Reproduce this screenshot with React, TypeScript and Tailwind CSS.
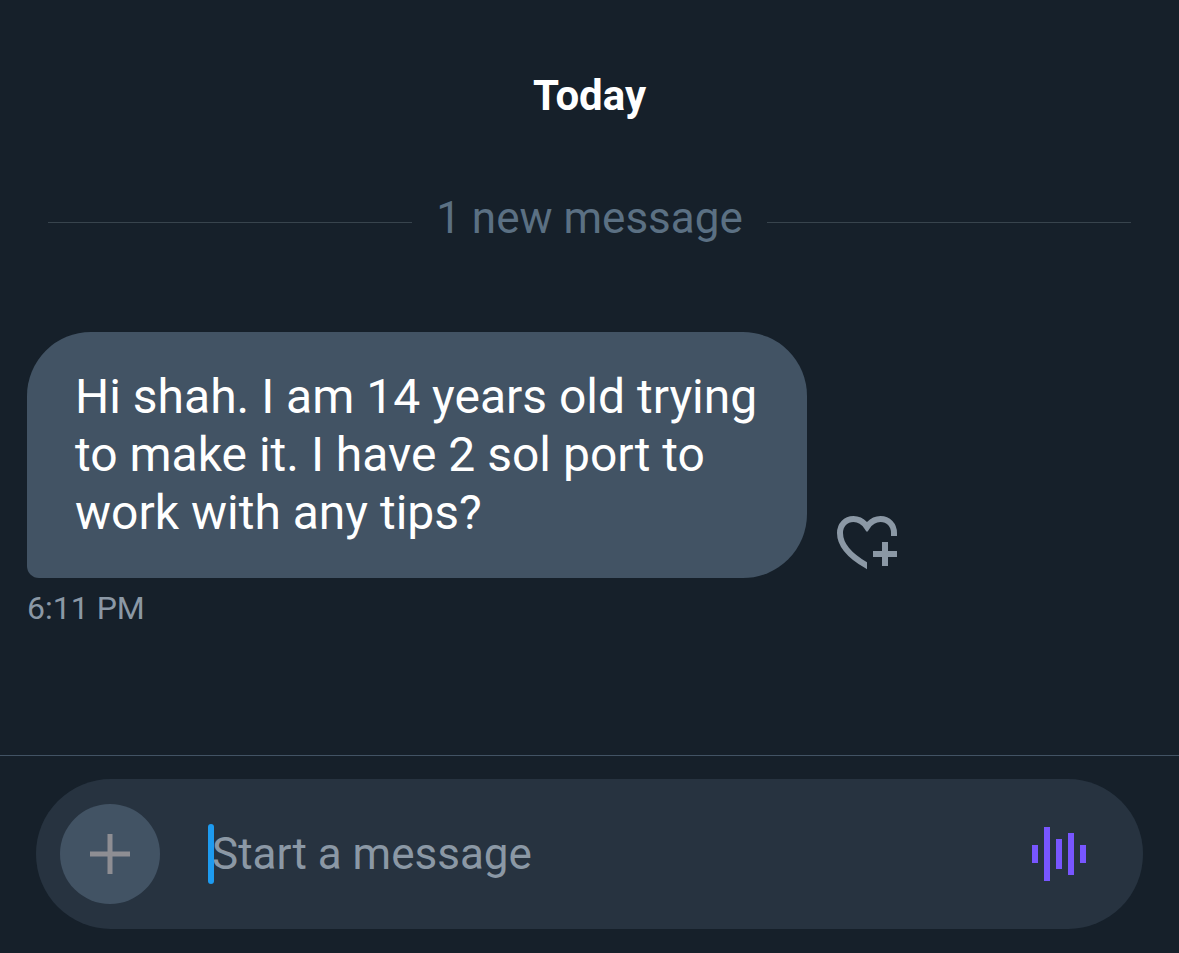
import React from "react";

function HeartPlusIcon() {
  return (
    <svg viewBox="0 0 62 56" className="h-14 w-[62px]" fill="none" aria-hidden="true">
      <clipPath id="heart-left">
        <rect x="0" y="0" width="31" height="56" />
      </clipPath>
      <clipPath id="heart-right">
        <rect x="31" y="0" width="31" height="56" />
      </clipPath>
      <g stroke="#8b98a5" strokeWidth="6">
        <path
          clipPath="url(#heart-left)"
          d="M33 15L31 12C27.500 6.700 22.500 4 17.500 4C9.500 4 4 10 4 18C4 29.500 13 40.500 31 50.700L36 53.500"
        />
        <path clipPath="url(#heart-right)" d="M29 15L31 12C34.500 6.700 39.500 4 44.500 4C52.500 4 58 10 58 18V21" />
        <path d="M49 27v24M37 39h24" />
      </g>
    </svg>
  );
}

function VoiceIcon() {
  return (
    <svg viewBox="0 0 54 54" className="h-[54px] w-[54px]" fill="#7856ff" aria-hidden="true">
      <rect x="0" y="18" width="6" height="18" />
      <rect x="12" y="0" width="6" height="54" />
      <rect x="24" y="12" width="6" height="30" />
      <rect x="36" y="6" width="6" height="42" />
      <rect x="48" y="18" width="6" height="18" />
    </svg>
  );
}

export default function App() {
  return (
    <div className="flex min-h-screen flex-col bg-[#16202a] font-[Roboto,sans-serif] text-white">
      <main className="flex-1 pt-[72px]">
        <h1 className="text-center text-[42px] leading-[48px] font-bold">Today</h1>

        <div className="mt-[70px] flex items-end gap-6 px-12">
          <span className="mb-[23px] h-px flex-1 bg-[#38444d]" />
          <p className="text-[44px] leading-[56px] text-[#5b7083]">1 new message</p>
          <span className="mb-[23px] h-px flex-1 bg-[#38444d]" />
        </div>

        <div className="mt-[86px] flex items-end gap-[29px] pl-[27px]">
          <p className="max-w-[780px] rounded-[64px] rounded-bl-[12px] bg-[#425364] px-12 py-9 text-[48px] leading-[58px]">
            Hi shah. I am 14 years old trying to make it. I have 2 sol port to work with any tips?
          </p>
          <button type="button" aria-label="Add reaction" className="mb-[7px]">
            <HeartPlusIcon />
          </button>
        </div>
        <time className="mt-2 block pl-[27px] text-[32px] leading-[44px] text-[#8b98a5]">6:11 PM</time>
      </main>

      <footer className="border-t border-[#425364] px-9 pt-[23px] pb-6">
        <form className="flex items-center rounded-full bg-[#273340] py-[25px] pr-[57px] pl-6">
          <button
            type="button"
            aria-label="Add attachment"
            className="flex h-[100px] w-[100px] items-center justify-center rounded-full bg-[#425364]"
          >
            <svg viewBox="0 0 40 40" className="h-10 w-10" aria-hidden="true">
              <path d="M20 0v40M0 20h40" stroke="#8e8e93" strokeWidth="5" />
            </svg>
          </button>
          <div className="relative ml-12 flex flex-1 items-center">
            <span className="absolute left-0 h-[60px] w-1.5 rounded-full bg-[#1d9bf0]" />
            <input
              type="text"
              aria-label="Start a message"
              placeholder="Start a message"
              className="w-full bg-transparent pl-1 text-[44px] leading-[60px] outline-none placeholder:text-[#8b98a5]"
            />
          </div>
          <button type="button" aria-label="Record voice message">
            <VoiceIcon />
          </button>
        </form>
      </footer>
    </div>
  );
}
